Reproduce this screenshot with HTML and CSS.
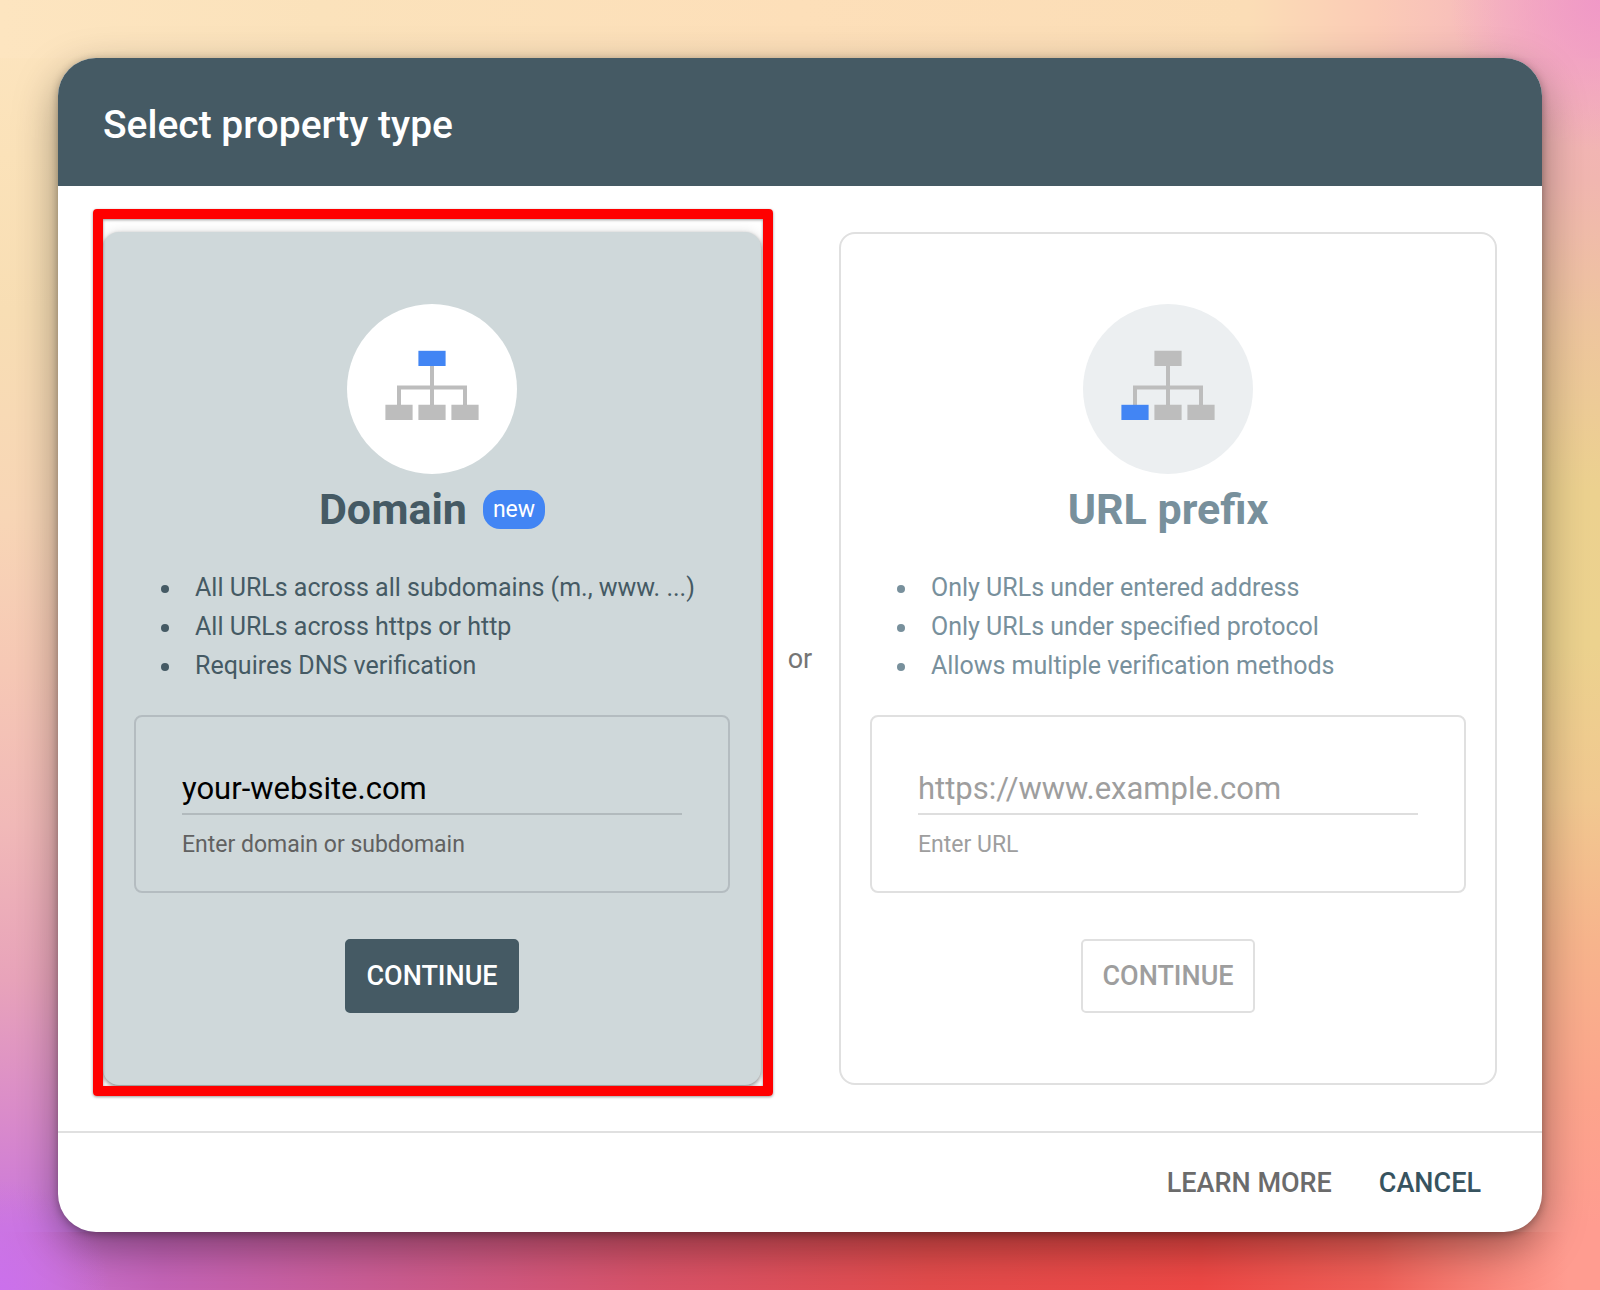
FILE: index.html
```html
<!DOCTYPE html>
<html lang="en">
<head>
<meta charset="utf-8">
<meta name="viewport" content="width=device-width, initial-scale=1">
<title>Select property type</title>
<link rel="stylesheet" href="styles.css">
</head>
<body>
<main class="dialog" role="dialog" aria-labelledby="dialog-title">
  <header class="dialog-header">
    <h1 class="dialog-title" id="dialog-title">Select property type</h1>
  </header>
  <div class="options">
    <form class="card card-active">
      <div class="badge-circle">
        <svg class="sitemap" viewBox="0 0 94 70" aria-hidden="true">
          <path class="line" d="M47 15V56M14 56V37.5H80V56"/>
          <path class="node" d="M.4 54.8h27.2v15.2H.4zM33.4 54.8h27.2v15.2H33.4zM66.4 54.8h27.2v15.2H66.4z"/>
          <path class="node-hot" d="M33.4 .8h27.2v15.2H33.4z"/>
        </svg>
      </div>
      <h2 class="card-title">Domain <span class="tag">new</span></h2>
      <ul class="facts">
        <li>All URLs across all subdomains (m., www. ...)</li>
        <li>All URLs across https or http</li>
        <li>Requires DNS verification</li>
      </ul>
      <div class="field">
        <input class="field-input" id="domain" type="text" value="your-website.com">
        <label class="field-hint" for="domain">Enter domain or subdomain</label>
      </div>
      <button class="continue" type="button">CONTINUE</button>
    </form>
    <span class="or">or</span>
    <form class="card">
      <div class="badge-circle">
        <svg class="sitemap" viewBox="0 0 94 70" aria-hidden="true">
          <path class="line" d="M47 15V56M14 56V37.5H80V56"/>
          <path class="node" d="M33.4 .8h27.2v15.2H33.4zM33.4 54.8h27.2v15.2H33.4zM66.4 54.8h27.2v15.2H66.4z"/>
          <path class="node-hot" d="M.4 54.8h27.2v15.2H.4z"/>
        </svg>
      </div>
      <h2 class="card-title">URL prefix</h2>
      <ul class="facts">
        <li>Only URLs under entered address</li>
        <li>Only URLs under specified protocol</li>
        <li>Allows multiple verification methods</li>
      </ul>
      <div class="field">
        <input class="field-input" id="url" type="text" placeholder="https://www.example.com">
        <label class="field-hint" for="url">Enter URL</label>
      </div>
      <button class="continue" type="button">CONTINUE</button>
    </form>
  </div>
  <footer class="dialog-footer">
    <a class="action" href="#learn">LEARN MORE</a>
    <button class="action action-primary" type="button">CANCEL</button>
  </footer>
</main>
</body>
</html>
```
FILE: styles.css
```css
* {
  box-sizing: border-box;
}

/* Corner glows, then the top, bottom and right bands, over the left-hand fade */
body {
  margin: 0;
  padding: 58px;
  min-height: 100vh;
  font-family: Roboto, "Liberation Sans", sans-serif;
  background:
    radial-gradient(circle at 100% 0%, rgba(240, 150, 200, 0.9) 0, rgba(240, 150, 200, 0) 150px) no-repeat,
    radial-gradient(circle at 0% 100%, #cb70ec 0, rgba(203, 112, 236, 0) 110px) no-repeat,
    linear-gradient(90deg, #fde5c0 0, #fbe2bb 20%, #fddfb9 50%, #fbddb6 78%, #fbcbb6 86%, #f6b9bd 94%, #f3aebc 100%) top / 100% 58px no-repeat,
    linear-gradient(90deg, #cb78dc 0, #c564b8 10%, #cc5c90 25%, #d8536a 40%, #e34c4c 58%, #ee4845 75%, #f06058 86%, #fb8a7e 94%, #ff9c90 98%) bottom / 100% 58px no-repeat,
    linear-gradient(#f4b2bc 58px, #f1b6b0 14%, #eec59e 25%, #ecd18f 38%, #ecd28e 50%, #f1c890 62%, #f7b48c 73%, #fca48c 85%, #ff9c90 95%) right / 50% 100% no-repeat,
    linear-gradient(#fde5c0 0, #fbe2b9 12%, #f8deb4 24%, #f8d6b6 40%, #f6c8b5 52%, #f1b9b8 64%, #e8a3ba 76%, #d98acb 87%, #cb78dc 95%);
}

.dialog {
  border-radius: 38px;
  background: #fff;
  box-shadow: 0 16px 44px rgba(0, 0, 0, 0.38), 0 2px 8px rgba(0, 0, 0, 0.3);
}

.dialog-header {
  padding: 43px 45px 37px;
  border-radius: 38px 38px 0 0;
  background: #455a64;
  color: #fff;
}

.dialog-title {
  margin: 0;
  font-size: 39px;
  font-weight: 500;
  line-height: 48px;
}

.options {
  display: grid;
  grid-template-columns: 1fr 78px 1fr;
  align-items: stretch;
  padding: 46px 45px;
}

.card {
  display: flex;
  flex-direction: column;
  align-items: center;
  padding: 70px 29px 69px;
  border: 2px solid #e0e0e0;
  border-radius: 16px;
  color: #78909c;
}

.card-active {
  position: relative;
  border-color: #cfd8da;
  background: #cfd8da;
  box-shadow: 0 2px 4px rgba(0, 0, 0, 0.4), 0 0 12px rgba(0, 0, 0, 0.12);
  color: #455a64;
}

/* Red highlight laid over the selected card */
.card-active::after {
  content: "";
  position: absolute;
  inset: -25px -14px -13px -12px;
  border: 10px solid #f00;
  border-radius: 4px;
  box-shadow: 0 1px 3px rgba(0, 0, 0, 0.4), inset 0 1px 3px rgba(0, 0, 0, 0.4);
  pointer-events: none;
}

.badge-circle {
  display: flex;
  align-items: center;
  justify-content: center;
  width: 170px;
  height: 170px;
  padding-bottom: 8px;
  border-radius: 50%;
  background: #eceff1;
}

.card-active .badge-circle {
  background: #fff;
}

.sitemap {
  width: 94px;
  height: 70px;
}

.line {
  fill: none;
  stroke: #bdbdbd;
  stroke-width: 4;
}

.node {
  fill: #bdbdbd;
}

.node-hot {
  fill: #4285f4;
}

.card-title {
  display: flex;
  align-items: center;
  gap: 16px;
  margin: 8px 0 32px;
  font-size: 43px;
  font-weight: 700;
  line-height: 54px;
}

.tag {
  padding: 0 10px;
  border-radius: 17px;
  background: #4285f4;
  color: #fff;
  font-size: 23px;
  font-weight: 400;
  line-height: 39px;
}

.facts {
  align-self: stretch;
  margin: 0 0 30px;
  padding: 0 0 0 49px;
  font-size: 25px;
  line-height: 39px;
}

.facts li {
  padding-left: 12px;
}

.field {
  align-self: stretch;
  display: flex;
  flex-direction: column;
  padding: 48px 46px 30px;
  border: 2px solid #e0e0e0;
  border-radius: 8px;
}

.card-active .field {
  border-color: #b4bcc0;
}

.field-input {
  width: 100%;
  height: 50px;
  padding: 0 0 2px;
  border: 0;
  border-bottom: 2px solid #dedede;
  outline: 0;
  background: transparent;
  color: #000;
  font-family: inherit;
  font-size: 31px;
}

.field-input::placeholder {
  color: #9e9e9e;
  opacity: 1;
}

.card-active .field-input {
  border-bottom-color: #b2babd;
}

.field-hint {
  margin-top: 14px;
  color: #9e9e9e;
  font-size: 23px;
  line-height: 32px;
}

.card-active .field-hint {
  color: #616161;
}

.continue {
  height: 74px;
  margin-top: 46px;
  margin-bottom: 1px;
  padding: 0 19px;
  border: 2px solid #e0e0e0;
  border-radius: 5px;
  background: transparent;
  color: #9e9e9e;
  font-family: inherit;
  font-size: 27px;
  font-weight: 500;
}

.card-active .continue {
  border-color: #455a64;
  background: #455a64;
  color: #fff;
}

.or {
  align-self: center;
  justify-self: center;
  color: #757575;
  font-size: 27px;
  line-height: 32px;
}

.dialog-footer {
  display: flex;
  justify-content: flex-end;
  align-items: center;
  gap: 47px;
  padding: 34px 61px 33px;
  border-top: 2px solid #e0e0e0;
}

.action {
  padding: 0;
  border: 0;
  background: transparent;
  color: #6b6b6b;
  font-family: inherit;
  font-size: 27px;
  font-weight: 500;
  line-height: 32px;
  text-decoration: none;
}

.action-primary {
  color: #37535f;
}
```
